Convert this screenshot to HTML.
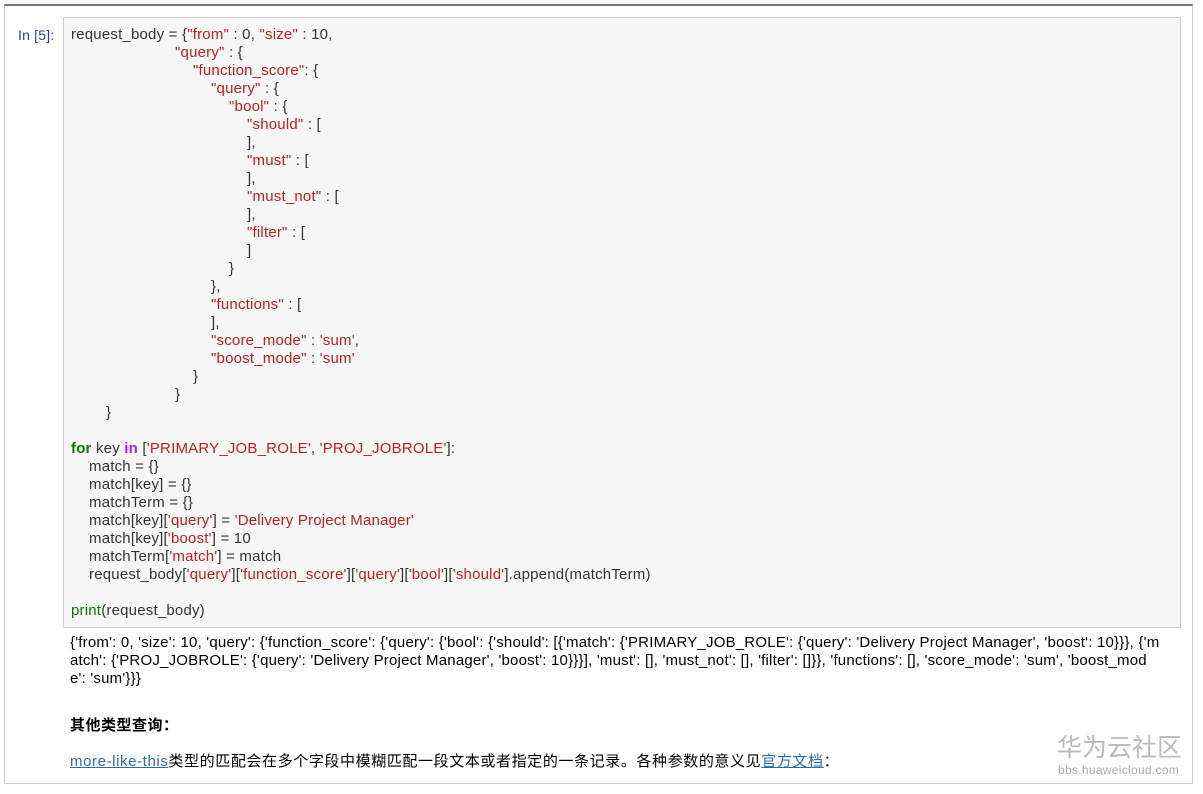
<!DOCTYPE html>
<html><head><meta charset="utf-8"><style>
html,body{margin:0;padding:0;background:#fff;width:1203px;height:794px;overflow:hidden}
body{font-family:"Liberation Sans","Noto Sans CJK SC",sans-serif;font-size:15px;letter-spacing:0.2px;color:#333;position:relative}
.frame{position:absolute;left:4px;top:4px;width:1189px;height:780px;border:1px solid #ccc;border-top:2px solid #777;box-sizing:border-box}
.code{position:absolute;left:63px;top:17px;width:1118px;height:611px;background:#f7f7f7;border:1px solid #cfcfcf;box-sizing:border-box}
.w{position:absolute;left:0;top:1px;width:1203px;height:794px}
.l{position:absolute;white-space:pre;line-height:18px;height:18px}
.s{color:#BA2121}.k{color:#008000;font-weight:bold}.p{color:#AA22FF;font-weight:bold}.b{color:#008000}
.prompt{position:absolute;left:18px;top:25px;color:#303F9F;line-height:18px;font-size:14px}
a{color:#296eaa;text-decoration:underline}
</style></head><body>
<div class="frame"></div>
<div class="code"></div>
<div class="w">
<div class="prompt">In [5]:</div>
<div class="l" style="left:71px;top:25px">request_body = {<span class="s">"from"</span> : 0, <span class="s">"size"</span> : 10,</div>
<div class="l" style="left:175px;top:43px"><span class="s">"query"</span> : {</div>
<div class="l" style="left:193px;top:61px"><span class="s">"function_score"</span>: {</div>
<div class="l" style="left:211px;top:79px"><span class="s">"query"</span> : {</div>
<div class="l" style="left:229px;top:97px"><span class="s">"bool"</span> : {</div>
<div class="l" style="left:247px;top:115px"><span class="s">"should"</span> : [</div>
<div class="l" style="left:247px;top:133px">],</div>
<div class="l" style="left:247px;top:151px"><span class="s">"must"</span> : [</div>
<div class="l" style="left:247px;top:169px">],</div>
<div class="l" style="left:247px;top:187px"><span class="s">"must_not"</span> : [</div>
<div class="l" style="left:247px;top:205px">],</div>
<div class="l" style="left:247px;top:223px"><span class="s">"filter"</span> : [</div>
<div class="l" style="left:247px;top:241px">]</div>
<div class="l" style="left:229px;top:259px">}</div>
<div class="l" style="left:211px;top:277px">},</div>
<div class="l" style="left:211px;top:295px"><span class="s">"functions"</span> : [</div>
<div class="l" style="left:211px;top:313px">],</div>
<div class="l" style="left:211px;top:331px"><span class="s">"score_mode"</span> : <span class="s">'sum'</span>,</div>
<div class="l" style="left:211px;top:349px"><span class="s">"boost_mode"</span> : <span class="s">'sum'</span></div>
<div class="l" style="left:193px;top:367px">}</div>
<div class="l" style="left:175px;top:385px">}</div>
<div class="l" style="left:106px;top:403px">}</div>
<div class="l" style="left:71px;top:439px"><span class="k">for</span> key <span class="p">in</span> [<span class="s">'PRIMARY_JOB_ROLE'</span>, <span class="s">'PROJ_JOBROLE'</span>]:</div>
<div class="l" style="left:89px;top:457px">match = {}</div>
<div class="l" style="left:89px;top:475px">match[key] = {}</div>
<div class="l" style="left:89px;top:493px">matchTerm = {}</div>
<div class="l" style="left:89px;top:511px">match[key][<span class="s">'query'</span>] = <span class="s">'Delivery Project Manager'</span></div>
<div class="l" style="left:89px;top:529px">match[key][<span class="s">'boost'</span>] = 10</div>
<div class="l" style="left:89px;top:547px">matchTerm[<span class="s">'match'</span>] = match</div>
<div class="l" style="left:89px;top:565px">request_body[<span class="s">'query'</span>][<span class="s">'function_score'</span>][<span class="s">'query'</span>][<span class="s">'bool'</span>][<span class="s">'should'</span>].append(matchTerm)</div>
<div class="l" style="left:71px;top:601px"><span class="b">print</span>(request_body)</div>
<div class="l" style="left:70px;top:633px;color:#000">{'from': 0, 'size': 10, 'query': {'function_score': {'query': {'bool': {'should': [{'match': {'PRIMARY_JOB_ROLE': {'query': 'Delivery Project Manager', 'boost': 10}}}, {'m</div>
<div class="l" style="left:70px;top:651px;color:#000">atch': {'PROJ_JOBROLE': {'query': 'Delivery Project Manager', 'boost': 10}}}], 'must': [], 'must_not': [], 'filter': []}}, 'functions': [], 'score_mode': 'sum', 'boost_mod</div>
<div class="l" style="left:70px;top:669px;color:#000">e': 'sum'}}}</div>
<div class="l" style="left:70px;top:716px;color:#000;font-weight:bold;letter-spacing:0.5px">其他类型查询：</div>
<div class="l" style="left:70px;top:752px;color:#000;letter-spacing:0.6px"><a>more-like-this</a>类型的匹配会在多个字段中模糊匹配一段文本或者指定的一条记录。各种参数的意义见<a>官方文档</a>：</div>
</div>
<div class="l" style="left:1057px;top:733px;font-size:25px;letter-spacing:0;line-height:30px;height:30px;color:#bbb">华为云社区</div>
<div class="l" style="left:1058px;top:761px;font-size:12px;letter-spacing:0.3px;color:#aaa">bbs.huaweicloud.com</div>
</body></html>
